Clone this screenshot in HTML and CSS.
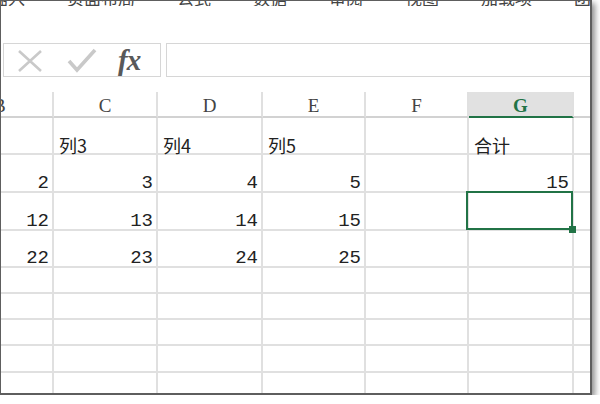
FILE: index.html
```html
<!DOCTYPE html>
<html lang="zh-CN">
<head>
<meta charset="utf-8">
<title>Sheet</title>
<link rel="stylesheet" href="styles.css">
</head>
<body>
<div class="win">
  <div class="tabs">
    <span class="tab first">插入</span>
    <span class="tab">页面布局</span>
    <span class="tab">公式</span>
    <span class="tab">数据</span>
    <span class="tab">审阅</span>
    <span class="tab">视图</span>
    <span class="tab">加载项</span>
    <span class="tab">团队</span>
  </div>
  <div class="fbar">
    <div class="fbtns">
      <svg class="ic-x" width="26" height="24" viewBox="0 0 26 24"><path d="M2 2 L24 22 M24 2 L2 22" stroke="#c9c9c9" stroke-width="2.6" fill="none"/></svg>
      <svg class="ic-ok" width="30" height="26" viewBox="0 0 30 26"><path d="M2 13 L10 22 L28 2" stroke="#c9c9c9" stroke-width="3.6" fill="none"/></svg>
      <span class="fx">fx</span>
    </div>
    <div class="finput"></div>
  </div>
  <div class="sheet">
    <div class="hd">B</div><div class="hd">C</div><div class="hd">D</div><div class="hd">E</div><div class="hd">F</div><div class="hd sel">G</div><div class="hd last"></div>

    <div class="c"></div><div class="c txt">列3</div><div class="c txt">列4</div><div class="c txt">列5</div><div class="c"></div><div class="c txt">合计</div><div class="c last"></div>

    <div class="c num">2</div><div class="c num">3</div><div class="c num">4</div><div class="c num">5</div><div class="c"></div><div class="c num">15</div><div class="c last"></div>

    <div class="c num">12</div><div class="c num">13</div><div class="c num">14</div><div class="c num">15</div><div class="c"></div><div class="c active"><span class="handle"></span></div><div class="c last"></div>

    <div class="c num">22</div><div class="c num">23</div><div class="c num">24</div><div class="c num">25</div><div class="c"></div><div class="c"></div><div class="c last"></div>

    <div class="c"></div><div class="c"></div><div class="c"></div><div class="c"></div><div class="c"></div><div class="c"></div><div class="c last"></div>
    <div class="c"></div><div class="c"></div><div class="c"></div><div class="c"></div><div class="c"></div><div class="c"></div><div class="c last"></div>
    <div class="c"></div><div class="c"></div><div class="c"></div><div class="c"></div><div class="c"></div><div class="c"></div><div class="c last"></div>
    <div class="c"></div><div class="c"></div><div class="c"></div><div class="c"></div><div class="c"></div><div class="c"></div><div class="c last"></div>
    <div class="c"></div><div class="c"></div><div class="c"></div><div class="c"></div><div class="c"></div><div class="c"></div><div class="c last"></div>
  </div>
</div>
</body>
</html>
```

FILE: styles.css
```css
html, body {
  margin: 0;
  padding: 0;
  background: #ffffff;
}

.win {
  width: 592px;
  height: 395px;
  box-sizing: border-box;
  border: 2px solid #5e5e5e;
  border-left-width: 1px;
  border-top-width: 1px;
  background: #ffffff;
  box-shadow: 3px 3px 6px rgba(0, 0, 0, 0.45);
  overflow: hidden;
}

.tabs {
  display: flex;
  align-items: flex-end;
  gap: 42px;
  height: 5px;
  overflow: hidden;
  white-space: nowrap;
  font-family: "Noto Sans CJK SC", sans-serif;
  font-size: 17px;
  line-height: 17px;
  color: #444444;
}

.tab.first {
  margin-left: -10px;
}

.fbar {
  display: flex;
  gap: 5px;
  margin-top: 37px;
  height: 34px;
  padding-left: 2px;
}

.fbtns {
  width: 158px;
  box-sizing: border-box;
  border: 1px solid #d6d6d6;
  display: flex;
  align-items: center;
  padding-left: 13px;
}

.ic-x {
  margin-top: 2px;
}

.ic-ok {
  margin-left: 24px;
  margin-top: 2px;
}

.fx {
  margin-left: 21px;
  font-family: "Liberation Serif", "DejaVu Serif", serif;
  font-style: italic;
  font-weight: bold;
  font-size: 29px;
  line-height: 29px;
  letter-spacing: -1px;
  color: #595959;
  margin-top: 0;
}

.finput {
  flex: 1;
  border: 1px solid #d6d6d6;
  border-right: none;
}

.sheet {
  margin-top: 15px;
  display: grid;
  grid-template-columns: 53px 104px 105px 103px 103px 105px 1fr;
  grid-template-rows: 26px 37px 38px 38px 37px 26px 26px 26px 27px 26px;
}

.hd,
.c {
  box-sizing: border-box;
  border-right: 2px solid #e0e0e0;
  border-bottom: 2px solid #e0e0e0;
  display: flex;
}

.hd {
  justify-content: center;
  align-items: center;
  padding-top: 3px;
  font-family: "Liberation Serif", serif;
  font-size: 19px;
  color: #444444;
  border-bottom-color: #d2d2d2;
}

.hd.sel {
  background: #e1e1e1;
  color: #217346;
  font-weight: bold;
  border-bottom-color: #217346;
}

.hd:first-child {
  justify-content: flex-start;
  text-indent: -8px;
}

.last {
  border-right: none;
}

.c {
  align-items: flex-end;
  font-family: "Liberation Mono", "Noto Sans CJK SC", monospace;
  font-size: 19px;
  line-height: 16px;
  color: #222222;
}

.c.num {
  justify-content: flex-end;
  padding-right: 3px;
}

.c.txt {
  padding-left: 5px;
  font-family: "Noto Sans CJK SC", sans-serif;
  font-size: 18px;
}

.active {
  position: relative;
}

.active::before {
  content: "";
  position: absolute;
  left: -3px;
  top: -2px;
  right: -1px;
  bottom: -1px;
  border: 2px solid #217346;
  z-index: 2;
}

.handle {
  position: absolute;
  right: -4px;
  bottom: -4px;
  width: 7px;
  height: 7px;
  background: #217346;
  z-index: 3;
}
```
